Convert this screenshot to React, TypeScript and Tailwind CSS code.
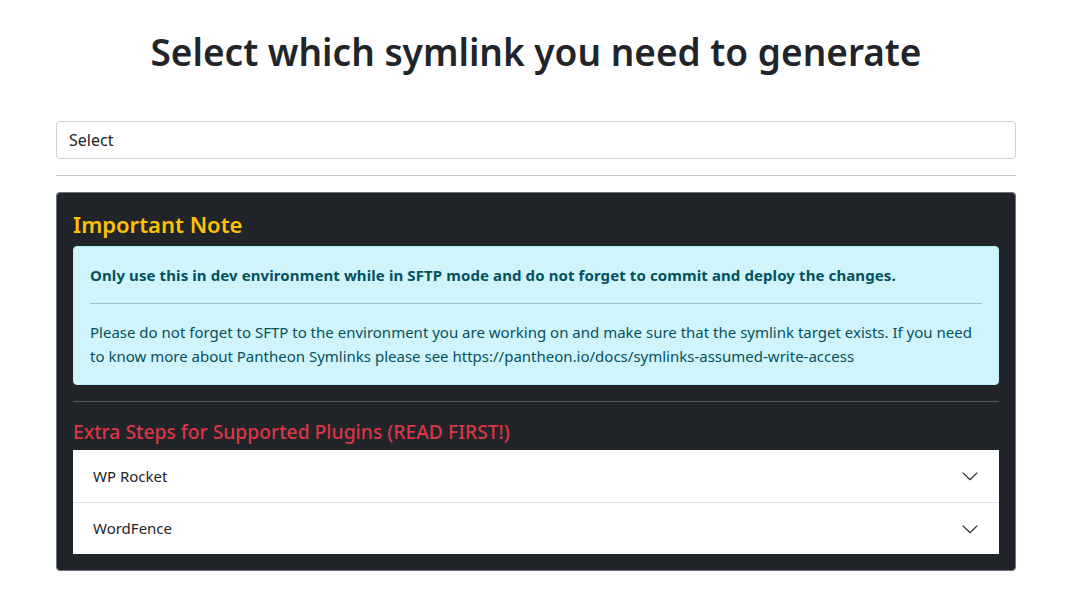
const plugins = ["WP Rocket", "WordFence"];

function Chevron() {
  return (
    <svg width="18" height="18" viewBox="0 0 16 16" fill="none" className="text-[#212529]">
      <path d="M1.5 5L8 11.2L14.5 5" stroke="currentColor" strokeWidth="1.1" />
    </svg>
  );
}

export default function App() {
  return (
    <div className="min-h-[610px] bg-white font-['Noto_Sans',sans-serif] text-[#212529]">
      <div className="ml-[56px] w-[960px] pt-[28px]">
        <h1 className="text-center text-[37px] font-semibold leading-[48px]">
          Select which symlink you need to generate
        </h1>

        <div className="mt-[45px] flex h-[38px] items-center rounded border border-[#ced4da] px-3 text-base">
          Select
        </div>

        <hr className="my-4 border-t border-[#c8c9ca]" />

        <div className="rounded border border-[#6c757d] bg-[#212529] p-4">
          <h3 className="text-[22px] font-semibold leading-[30px] text-[#ffc107]">Important Note</h3>

          <div className="mt-[7px] rounded border border-[#b6effb] bg-[#cff4fc] p-4 text-[#055160]">
            <p className="text-[15px] font-bold leading-6 tracking-[0.1px]">
              Only use this in dev environment while in SFTP mode and do not forget to commit and deploy the changes.
            </p>
            <hr className="my-4 border-t border-[#9ec5cf]" />
            <p className="text-[15px] leading-6">
              Please do not forget to SFTP to the environment you are working on and make sure that the symlink target
              exists. If you need to know more about Pantheon Symlinks please see
              https://pantheon.io/docs/symlinks-assumed-write-access
            </p>
          </div>

          <hr className="mt-4 border-t border-[#56595c]" />

          <h5 className="mt-[18px] text-[19.3px] font-medium leading-6 text-[#dc3545]">
            Extra Steps for Supported Plugins (READ FIRST!)
          </h5>

          <div className="mt-[6px] bg-white">
            {plugins.map((name, i) => (
              <div
                key={name}
                className={`flex h-[52px] items-center justify-between pl-5 pr-[20px] text-[15px] ${
                  i > 0 ? "border-t border-[#dee2e6]" : ""
                }`}
              >
                <span>{name}</span>
                <Chevron />
              </div>
            ))}
          </div>
        </div>
      </div>
    </div>
  );
}
